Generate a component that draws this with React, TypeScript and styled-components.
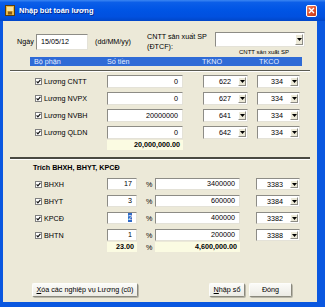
import React from 'react';
import styled, { createGlobalStyle } from 'styled-components';

const GlobalStyle = createGlobalStyle`
  html, body {
    margin: 0;
    padding: 0;
    background: #ffffff;
  }
  body {
    font-family: "Liberation Sans", Arial, sans-serif;
    font-size: 7.2px;
    color: #000;
  }
`;

const Window = styled.div`
  width: 325px;
  height: 307px;
  display: flex;
  flex-direction: column;
  overflow: hidden;
`;

const TitleBar = styled.div`
  height: 21px;
  flex: none;
  display: flex;
  align-items: center;
  padding: 0 8px 0 5px;
  gap: 4px;
  background: linear-gradient(#3b86f2 0%, #0b5ee8 12%, #0055e5 45%, #0150df 80%, #0146c8 100%);
`;

const Title = styled.span`
  color: #fff;
  font-weight: bold;
  font-size: 7.5px;
  text-shadow: 1px 1px 0 #0a2a8a;
`;

const CloseBtn = styled.div`
  margin-left: auto;
  width: 11px;
  height: 12px;
  box-sizing: border-box;
  border: 1px solid #fff;
  border-radius: 2px;
  background: linear-gradient(135deg, #ee8a6a 0%, #e0532f 50%, #c5381a 100%);
  display: flex;
  align-items: center;
  justify-content: center;
`;

const Frame = styled.div`
  flex: 1;
  display: flex;
  background: #0a57e0;
  padding: 0 8px 5px 3px;
  min-height: 0;
`;

const Client = styled.div`
  flex: 1;
  background: #ece9d8;
  display: flex;
  flex-direction: column;
  padding-bottom: 5px;
  min-height: 0;
`;

const TopRow = styled.div`
  margin-top: 11px;
  height: 16px;
  padding-left: 14px;
  display: grid;
  grid-template-columns: 19px 59px 52px 68px 90px;
  align-items: start;
`;

const Label = styled.span<{ $top?: number }>`
  margin-top: ${(p) => p.$top ?? 0}px;
  line-height: 10px;
  white-space: nowrap;
`;

const TwoLine = styled.span`
  line-height: 10px;
  white-space: nowrap;
`;

const Box = styled.div<{ $w: number; $h: number; $top?: number; $align?: string }>`
  width: ${(p) => p.$w}px;
  height: ${(p) => p.$h}px;
  margin-top: ${(p) => p.$top ?? 0}px;
  box-sizing: border-box;
  background: #fff;
  border: 1px solid;
  border-color: #8d8c86 #e4e2d8 #e4e2d8 #8d8c86;
  line-height: ${(p) => p.$h - 2}px;
  text-align: ${(p) => p.$align ?? 'right'};
  padding: 0 4px;
  white-space: nowrap;
  align-self: center;
`;

const Combo = styled.div<{ $w: number; $h: number }>`
  width: ${(p) => p.$w}px;
  height: ${(p) => p.$h}px;
  box-sizing: border-box;
  background: #fff;
  border: 1px solid;
  border-color: #8d8c86 #e4e2d8 #e4e2d8 #8d8c86;
  display: flex;
  align-items: stretch;
  align-self: center;
  padding: 1px;
`;

const ComboText = styled.span`
  flex: 1;
  text-align: right;
  padding-right: 7px;
  line-height: 9px;
  align-self: center;
`;

const ArrowBtn = styled.div`
  width: 8px;
  flex: none;
  background: #ece9d8;
  border: 1px solid;
  border-color: #fff #8d8c86 #8d8c86 #fff;
  box-sizing: border-box;
  display: flex;
  align-items: center;
  justify-content: center;
`;

const Note = styled.div`
  margin-left: 236px;
  line-height: 8px;
  font-size: 6px;
  white-space: nowrap;
`;

const HeaderBar = styled.div`
  margin: 1px 0 0 27px;
  width: 272px;
  height: 9px;
  background: #2f6bd6;
  color: #e6eeff;
  display: grid;
  grid-template-columns: 73px 95px 57px auto;
  padding-left: 4px;
  box-sizing: border-box;
  line-height: 9px;
`;

const Groove = styled.div<{ $thick?: boolean; $top: number }>`
  margin: ${(p) => p.$top}px 0 0 7px;
  width: 300px;
  height: 0;
  border-top: ${(p) => (p.$thick ? 2 : 1)}px solid ${(p) => (p.$thick ? '#4a4a42' : '#5a5a52')};
  border-bottom: 1px solid #ffffff;
`;

const Grid1 = styled.div<{ $top: number }>`
  margin-top: ${(p) => p.$top}px;
  padding-left: 32px;
  display: grid;
  grid-template-columns: 72px 96px 54px 43px;
  grid-auto-rows: 13px;
  row-gap: 4px;
`;

const Grid2 = styled.div<{ $top: number; $rows: number; $gap: number }>`
  margin-top: ${(p) => p.$top}px;
  padding-left: 32px;
  display: grid;
  grid-template-columns: 72px 36px 12px 101px 44px;
  grid-auto-rows: ${(p) => p.$rows}px;
  row-gap: ${(p) => p.$gap}px;
`;

const CheckCell = styled.label`
  display: flex;
  align-items: center;
  gap: 2px;
  white-space: nowrap;
`;

const Pct = styled.span`
  align-self: center;
  padding-left: 3px;
`;

const TotalBox = styled.div<{ $w: number; $col: number }>`
  grid-column: ${(p) => p.$col};
  width: ${(p) => p.$w}px;
  height: 10px;
  background: #fbfbe2;
  font-weight: bold;
  text-align: right;
  padding-right: 3px;
  box-sizing: border-box;
  line-height: 10px;
  white-space: nowrap;
`;

const SectionTitle = styled.div`
  margin: 3px 0 0 30px;
  line-height: 10px;
  font-weight: bold;
`;

const Selected = styled.span`
  background: #316ac5;
  color: #fff;
`;

const ButtonRow = styled.div`
  margin-top: auto;
  padding: 0 25px 0 29px;
  display: flex;
  gap: 4px;
`;

const Button = styled.div<{ $w: number }>`
  width: ${(p) => p.$w}px;
  height: 14px;
  box-sizing: border-box;
  border: 1px solid;
  border-color: #fdfdfb #8a887c #8a887c #fdfdfb;
  border-radius: 2px;
  background: linear-gradient(#fbfbf8, #ecebe4);
  box-shadow: 1px 1px 0 #b9b7aa;
  text-align: center;
  line-height: 12px;
  white-space: nowrap;
  &:nth-child(2) {
    margin-left: auto;
  }
`;

const Arrow = () => (
  <svg width="5" height="3" viewBox="0 0 5 3">
    <path d="M0 0H5L2.5 3Z" fill="#000" />
  </svg>
);

const Check = () => (
  <svg width="7" height="7" viewBox="0 0 7 7">
    <rect x="0.5" y="0.5" width="6" height="6" fill="#fff" stroke="#7f7f7f" />
    <path d="M1.6 3.4L2.9 4.8L5.4 1.9" fill="none" stroke="#111" strokeWidth="1.2" />
  </svg>
);

const AppIcon = () => (
  <svg width="10" height="11" viewBox="0 0 10 11">
    <rect x="0.5" y="0.5" width="9" height="10" fill="#e9b844" stroke="#5a3d0c" />
    <rect x="2" y="2" width="6" height="4" fill="#f7e3a0" />
    <rect x="3" y="6.5" width="4" height="3" fill="#8a5a14" />
  </svg>
);

const CloseX = () => (
  <svg width="7" height="7" viewBox="0 0 7 7">
    <path d="M1 1L6 6M6 1L1 6" stroke="#fff" strokeWidth="1.4" />
  </svg>
);

const salaries = [
  { name: 'Lương CNTT', amount: '0', no: '622', co: '334' },
  { name: 'Lương NVPX', amount: '0', no: '627', co: '334' },
  { name: 'Lương NVBH', amount: '20000000', no: '641', co: '334' },
  { name: 'Lương QLDN', amount: '0', no: '642', co: '334' },
];

const deductions = [
  { name: 'BHXH', rate: '17', amount: '3400000', acc: '3383' },
  { name: 'BHYT', rate: '3', amount: '600000', acc: '3384' },
  { name: 'KPCĐ', rate: '2', amount: '400000', acc: '3382', selected: true },
  { name: 'BHTN', rate: '1', amount: '200000', acc: '3388' },
];

export default function App() {
  return (
    <>
      <GlobalStyle />
      <Window>
        <TitleBar>
          <AppIcon />
          <Title>Nhập bút toán lương</Title>
          <CloseBtn>
            <CloseX />
          </CloseBtn>
        </TitleBar>
        <Frame>
          <Client>
            <TopRow>
              <Label $top={5}>Ngày</Label>
              <Box $w={52} $h={16} $top={2} $align="left" style={{ alignSelf: 'start' }}>
                15/05/12
              </Box>
              <Label $top={5}>(dd/MM/yy)</Label>
              <TwoLine>
                CNTT sản xuất SP
                <br />
                (ĐTCF):
              </TwoLine>
              <Combo $w={90} $h={15} style={{ alignSelf: 'start' }}>
                <ComboText />
                <ArrowBtn>
                  <Arrow />
                </ArrowBtn>
              </Combo>
            </TopRow>
            <Note>CNTT sản xuất SP</Note>
            <HeaderBar>
              <span>Bộ phận</span>
              <span>Số tiền</span>
              <span>TKNO</span>
              <span>TKCO</span>
            </HeaderBar>
            <Groove $top={4} />
            <Grid1 $top={3}>
              {salaries.map((s) => (
                <React.Fragment key={s.name}>
                  <CheckCell>
                    <Check />
                    {s.name}
                  </CheckCell>
                  <Box $w={76} $h={13}>{s.amount}</Box>
                  <Combo $w={45} $h={13}>
                    <ComboText>{s.no}</ComboText>
                    <ArrowBtn>
                      <Arrow />
                    </ArrowBtn>
                  </Combo>
                  <Combo $w={43} $h={13}>
                    <ComboText>{s.co}</ComboText>
                    <ArrowBtn>
                      <Arrow />
                    </ArrowBtn>
                  </Combo>
                </React.Fragment>
              ))}
            </Grid1>
            <Grid1 $top={1}>
              <TotalBox $w={76} $col={2}>20,000,000.00</TotalBox>
            </Grid1>
            <Groove $thick $top={4} />
            <SectionTitle>Trích BHXH, BHYT, KPCĐ</SectionTitle>
            <Grid2 $top={5} $rows={12} $gap={5}>
              {deductions.map((d) => (
                <React.Fragment key={d.name}>
                  <CheckCell>
                    <Check />
                    {d.name}
                  </CheckCell>
                  <Box $w={30} $h={12}>
                    {d.selected ? <Selected>{d.rate}</Selected> : d.rate}
                  </Box>
                  <Pct>%</Pct>
                  <Box $w={85} $h={12}>{d.amount}</Box>
                  <Combo $w={44} $h={12}>
                    <ComboText>{d.acc}</ComboText>
                    <ArrowBtn>
                      <Arrow />
                    </ArrowBtn>
                  </Combo>
                </React.Fragment>
              ))}
            </Grid2>
            <Grid2 $top={1} $rows={10} $gap={0}>
              <TotalBox $w={30} $col={2}>23.00</TotalBox>
              <Pct>%</Pct>
              <TotalBox $w={85} $col={4}>4,600,000.00</TotalBox>
            </Grid2>
            <ButtonRow>
              <Button $w={106}>
                <u>X</u>óa các nghiệp vụ Lương (cũ)
              </Button>
              <Button $w={36}>
                <u>N</u>hập sổ
              </Button>
              <Button $w={43}>Đóng</Button>
            </ButtonRow>
          </Client>
        </Frame>
      </Window>
    </>
  );
}
